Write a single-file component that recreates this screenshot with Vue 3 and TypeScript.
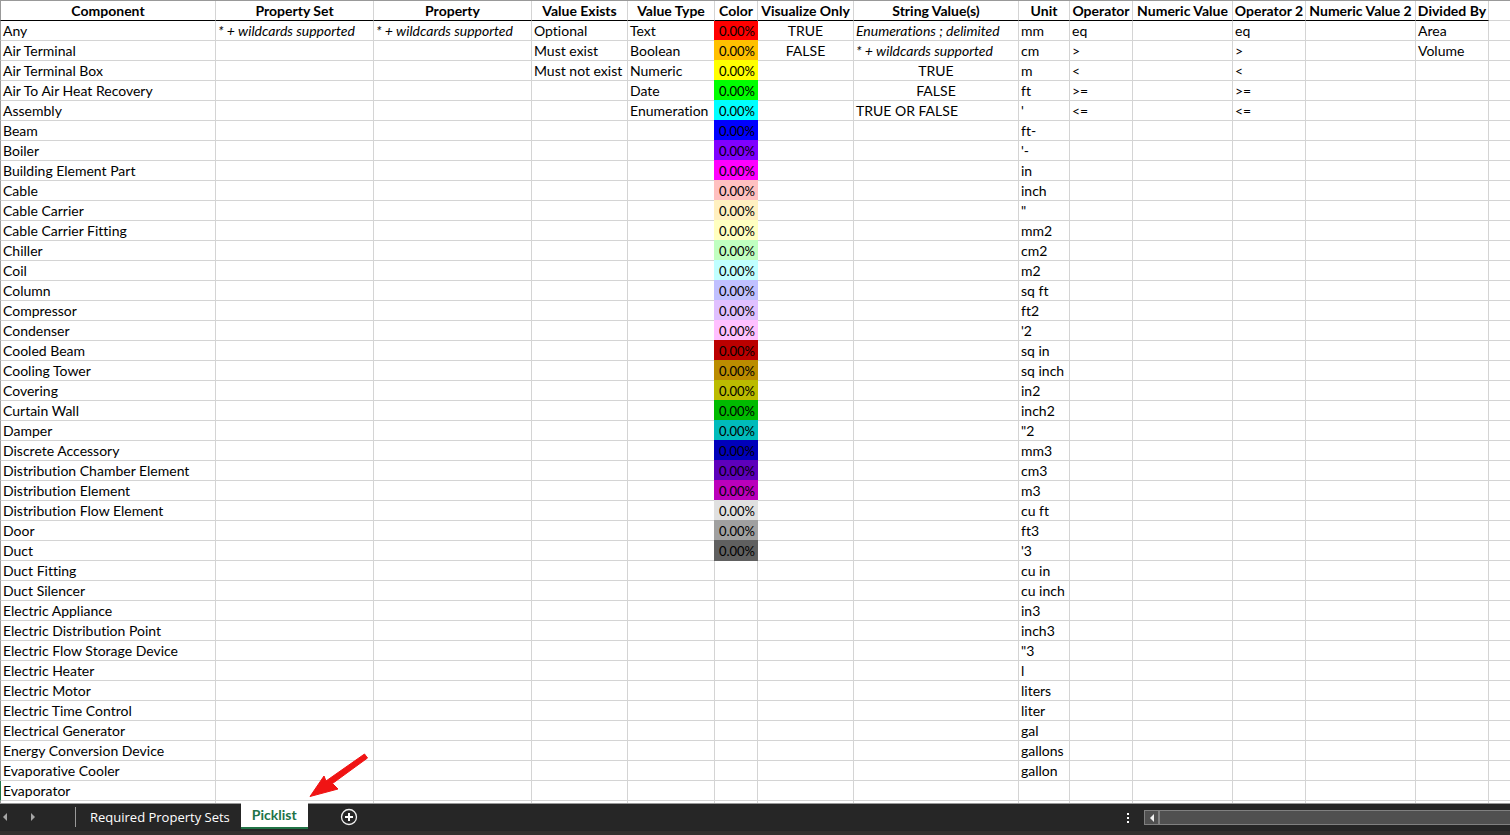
<script setup lang="ts">
interface Column {
  key: string
  label: string
  align?: 'center'
}

const columns: Column[] = [
  { key: 'component', label: 'Component' },
  { key: 'set', label: 'Property Set' },
  { key: 'property', label: 'Property' },
  { key: 'exists', label: 'Value Exists' },
  { key: 'type', label: 'Value Type' },
  { key: 'color', label: 'Color' },
  { key: 'visualize', label: 'Visualize Only', align: 'center' },
  { key: 'string', label: 'String Value(s)' },
  { key: 'unit', label: 'Unit' },
  { key: 'operator', label: 'Operator' },
  { key: 'numeric', label: 'Numeric Value' },
  { key: 'operator2', label: 'Operator 2' },
  { key: 'numeric2', label: 'Numeric Value 2' },
  { key: 'divided', label: 'Divided By' },
]

const operators = ['eq', '>', '<', '>=', '<=']

const values: Record<string, string[]> = {
  component: [
    'Any', 'Air Terminal', 'Air Terminal Box', 'Air To Air Heat Recovery', 'Assembly', 'Beam', 'Boiler',
    'Building Element Part', 'Cable', 'Cable Carrier', 'Cable Carrier Fitting', 'Chiller', 'Coil', 'Column',
    'Compressor', 'Condenser', 'Cooled Beam', 'Cooling Tower', 'Covering', 'Curtain Wall', 'Damper',
    'Discrete Accessory', 'Distribution Chamber Element', 'Distribution Element', 'Distribution Flow Element',
    'Door', 'Duct', 'Duct Fitting', 'Duct Silencer', 'Electric Appliance', 'Electric Distribution Point',
    'Electric Flow Storage Device', 'Electric Heater', 'Electric Motor', 'Electric Time Control',
    'Electrical Generator', 'Energy Conversion Device', 'Evaporative Cooler', 'Evaporator', '',
  ],
  set: ['* + wildcards supported'],
  property: ['* + wildcards supported'],
  exists: ['Optional', 'Must exist', 'Must not exist'],
  type: ['Text', 'Boolean', 'Numeric', 'Date', 'Enumeration'],
  visualize: ['TRUE', 'FALSE'],
  string: ['Enumerations ; delimited', '* + wildcards supported', 'TRUE', 'FALSE', 'TRUE OR FALSE'],
  unit: [
    'mm', 'cm', 'm', 'ft', "'", 'ft-', "'-", 'in', 'inch', '"', 'mm2', 'cm2', 'm2', 'sq ft', 'ft2', "'2",
    'sq in', 'sq inch', 'in2', 'inch2', '"2', 'mm3', 'cm3', 'm3', 'cu ft', 'ft3', "'3", 'cu in', 'cu inch',
    'in3', 'inch3', '"3', 'l', 'liters', 'liter', 'gal', 'gallons', 'gallon',
  ],
  operator: operators,
  operator2: operators,
  divided: ['Area', 'Volume'],
}

const swatches = [
  '#ff0000', '#ffc000', '#ffff00', '#00ff00', '#00ffff', '#0000ff', '#8000ff', '#ff00ff', '#ffc0c0',
  '#fff0c0', '#ffffc0', '#c0ffc0', '#c0ffff', '#c0c0ff', '#e0c0ff', '#ffc0ff', '#bb0000', '#bb8c00',
  '#bbbb00', '#00bb00', '#00bbbb', '#0000bb', '#5e00bb', '#bb00bb', '#e0e0e0', '#a0a0a0', '#606060',
]

function cellText(key: string, row: number): string {
  if (key === 'color') return swatches[row] ? '0.00%' : ''
  return values[key]?.[row] ?? ''
}

function cellClass(column: Column, row: number) {
  const text = cellText(column.key, row)
  return {
    swatch: column.key === 'color' && row < swatches.length,
    center: column.align === 'center' || (column.key === 'string' && (text === 'TRUE' || text === 'FALSE')),
    note: text.includes('wildcards') || text.includes('delimited'),
    active: column.key === 'component' && row === 38,
  }
}

function swatchStyle(column: Column, row: number) {
  return column.key === 'color' && swatches[row] ? { '--swatch': swatches[row] } : undefined
}
</script>

<template>
  <div class="workbook">
    <main class="sheet">
      <table>
        <colgroup>
          <col v-for="column in columns" :key="column.key" :class="'w-' + column.key" />
          <col />
        </colgroup>
        <thead>
          <tr>
            <th v-for="column in columns" :key="column.key" scope="col">{{ column.label }}</th>
            <td></td>
          </tr>
        </thead>
        <tbody>
          <tr v-for="(name, row) in values.component" :key="row">
            <td
              v-for="column in columns"
              :key="column.key"
              :class="cellClass(column, row)"
              :style="swatchStyle(column, row)"
            >{{ cellText(column.key, row) }}</td>
            <td></td>
          </tr>
        </tbody>
      </table>
    </main>

    <footer class="bar">
      <div class="steps">
        <button type="button" aria-label="Previous sheet">
          <svg width="4" height="8" viewBox="0 0 4 8"><path d="M4 0v8L0 4z" fill="#a6a6a6" /></svg>
        </button>
        <button type="button" aria-label="Next sheet">
          <svg width="4" height="8" viewBox="0 0 4 8"><path d="M0 0v8l4-4z" fill="#a6a6a6" /></svg>
        </button>
      </div>
      <nav class="tabs">
        <button type="button" class="tab">Required Property Sets</button>
        <div class="current">
          <button type="button" class="tab selected" aria-current="page">Picklist</button>
          <svg class="pointer" width="62" height="48" viewBox="0 0 62 48" aria-hidden="true">
            <path
              d="M57.500 4 60.500 8 25.500 33.500 31 39 3 46.500 17 26 19 31z"
              fill="#f01414"
              stroke="#f01414"
              stroke-width="1"
              stroke-linejoin="round"
            />
          </svg>
        </div>
      </nav>
      <button type="button" class="add" aria-label="New sheet">
        <svg width="18" height="18" viewBox="0 0 18 18" fill="none">
          <circle cx="9" cy="9" r="7.500" stroke="#f0f0f0" stroke-width="1.300" />
          <path d="M9 5v8M5 9h8" stroke="#fff" stroke-width="2" />
        </svg>
      </button>
      <div class="scroll">
        <span class="grip"><i></i><i></i><i></i></span>
        <div class="track">
          <button type="button" aria-label="Scroll left">
            <svg width="4" height="8" viewBox="0 0 4 8"><path d="M4 0v8L0 4z" fill="#f0f0f0" /></svg>
          </button>
        </div>
      </div>
    </footer>
  </div>
</template>

<style>
body {
  margin: 0;
}
</style>

<style scoped>
.workbook {
  display: flex;
  flex-direction: column;
  height: 100vh;
  overflow: hidden;
  background: #fff;
  color: #000;
  font-family: Lato, "Noto Sans", sans-serif;
  font-size: 14px;
  font-variant-ligatures: none;
}

button {
  display: flex;
  align-items: center;
  justify-content: center;
  margin: 0;
  padding: 0;
  border: 0;
  background: none;
  color: inherit;
  font: inherit;
}

svg {
  display: block;
}

.sheet {
  flex: 1;
  min-height: 0;
  overflow: hidden;
  border-top: 1px solid #999;
}

table {
  width: 100%;
  table-layout: fixed;
  border-collapse: separate;
  border-spacing: 0;
}

.w-component { width: 216px; }
.w-set, .w-property { width: 158px; }
.w-exists, .w-visualize { width: 96px; }
.w-type { width: 87px; }
.w-color { width: 43px; }
.w-string { width: 165px; }
.w-unit { width: 51px; }
.w-operator { width: 63px; }
.w-numeric { width: 100px; }
.w-operator2, .w-divided { width: 73px; }
.w-numeric2 { width: 110px; }

th,
td {
  box-sizing: border-box;
  height: 20px;
  padding: 0 2px;
  border-right: 1px solid #d4d4d4;
  border-bottom: 1px solid #d4d4d4;
  line-height: 19px;
  text-align: left;
  white-space: nowrap;
}

th {
  position: relative;
  z-index: 1;
  padding: 0;
  border-bottom-color: #000;
  font-weight: 700;
  text-align: center;
}

th:first-child,
td:first-child {
  border-left: 1px solid #999;
}

td:last-child {
  border-right: 0;
}

td.active {
  border-left-color: #217346;
}

.center {
  text-align: center;
}

.note {
  font-style: italic;
}

.swatch {
  padding: 1px 2px 0 0;
  border-color: var(--swatch);
  background: var(--swatch);
  box-shadow: -1px 0 0 var(--swatch), 0 -1px 0 var(--swatch), -1px -1px 0 var(--swatch);
  font-size: 13px;
  line-height: 18px;
  text-align: right;
}

.bar {
  display: flex;
  align-items: flex-start;
  flex: none;
  height: 27px;
  border-top: 1px solid #999;
  border-bottom: 4px solid #33302e;
  background: #262626;
  color: #fff;
}

.steps {
  display: flex;
  align-items: center;
  gap: 24px;
  box-sizing: border-box;
  width: 76px;
  height: 20px;
  margin-top: 3px;
  padding-left: 3px;
  border-right: 1px solid #999;
}

.tabs {
  display: flex;
}

.tab {
  height: 25px;
  padding: 0 11px 0 14px;
  font-family: "Open Sans", sans-serif;
  font-size: 13px;
  line-height: 18px;
  white-space: nowrap;
}

.current {
  position: relative;
  margin-top: -1px;
}

.selected {
  height: 26px;
  padding: 0 11px;
  border-bottom: 2px solid #217346;
  background: #fff;
  color: #217346;
  font-family: Lato, sans-serif;
  font-size: 14px;
  font-weight: 700;
}

.pointer {
  position: absolute;
  bottom: 31px;
  left: 66px;
}

.add {
  margin: 4px 0 0 32px;
}

.scroll {
  display: flex;
  align-items: center;
  gap: 15px;
  width: 383px;
  margin: 6px 0 0 auto;
}

.grip {
  display: grid;
  gap: 2px;
}

.grip i {
  width: 2px;
  height: 2px;
  background: #fff;
}

.track {
  flex: 1;
  height: 13px;
  border: 1px solid #808080;
  border-right: 0;
  background: #505050;
}

.track button {
  width: 15px;
  height: 13px;
  border-right: 2px solid #808080;
}
</style>
